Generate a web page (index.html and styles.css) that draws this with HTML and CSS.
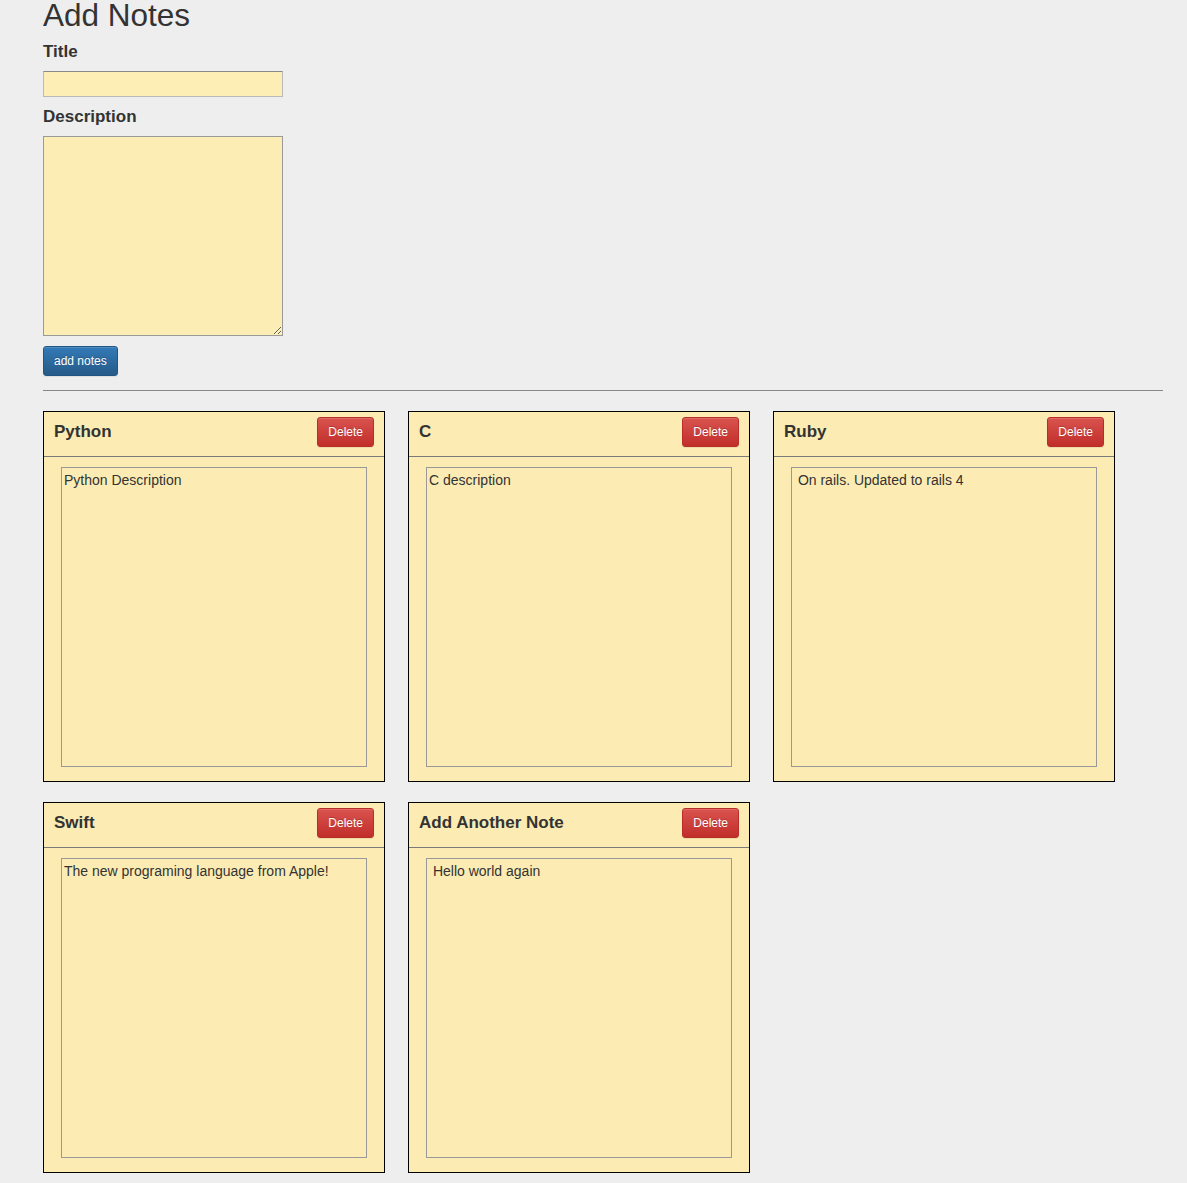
FILE: index.html
```html
<!DOCTYPE html>
<html lang="en">
<head>
<meta charset="utf-8">
<title>Add Notes</title>
<link rel="stylesheet" href="styles.css">
</head>
<body>
<div class="page">
  <h1 class="page-title">Add Notes</h1>
  <form class="note-form">
    <label class="field-label" for="title">Title</label>
    <input class="title-input" id="title" type="text">
    <label class="field-label" for="desc">Description</label>
    <textarea class="desc-input" id="desc"></textarea>
    <button type="button" class="btn btn-primary">add notes</button>
  </form>
  <hr class="divider">
  <div class="notes">
    <div class="note">
      <div class="note-head"><h3 class="note-title">Python</h3><button type="button" class="btn btn-danger">Delete</button></div>
      <textarea class="note-body" readonly>Python Description</textarea>
    </div>
    <div class="note">
      <div class="note-head"><h3 class="note-title">C</h3><button type="button" class="btn btn-danger">Delete</button></div>
      <textarea class="note-body" readonly>C description</textarea>
    </div>
    <div class="note">
      <div class="note-head"><h3 class="note-title">Ruby</h3><button type="button" class="btn btn-danger">Delete</button></div>
      <textarea class="note-body" readonly> On rails. Updated to rails 4</textarea>
    </div>
    <div class="note">
      <div class="note-head"><h3 class="note-title">Swift</h3><button type="button" class="btn btn-danger">Delete</button></div>
      <textarea class="note-body" readonly>The new programing language from Apple!</textarea>
    </div>
    <div class="note">
      <div class="note-head"><h3 class="note-title">Add Another Note</h3><button type="button" class="btn btn-danger">Delete</button></div>
      <textarea class="note-body" readonly> Hello world again</textarea>
    </div>
  </div>
</div>
</body>
</html>
```
FILE: styles.css
```css
* { box-sizing: border-box; }
html, body { margin: 0; padding: 0; }
body {
  background: #eeeeee;
  color: #333333;
  font-family: "Liberation Sans", Arial, sans-serif;
  font-size: 14px;
}
.page {
  padding: 0 0 0 43px;
  width: 1163px;
}
.page-title {
  margin: 0 0 12px 0;
  font-size: 31.5px;
  font-weight: normal;
  line-height: 30px;
}
.note-form {
  display: flex;
  flex-direction: column;
  align-items: flex-start;
}
.field-label {
  display: block;
  font-size: 17px;
  font-weight: bold;
  line-height: 20px;
  margin-bottom: 9px;
}
.title-input {
  width: 240px;
  height: 26px;
  margin: 0 0 10px 0;
  background: #fdeeb5;
  border: 1px solid #b9b9b9;
  border-top-color: #8a8a8a;
  padding: 2px 4px;
  font: 14px "Liberation Sans", Arial, sans-serif;
}
.desc-input {
  width: 240px;
  height: 200px;
  margin: 0 0 10px 0;
  background: #fcedb4;
  border: 1px solid #9a9a9a;
  padding: 2px;
  font: 14px "Liberation Sans", Arial, sans-serif;
}
.btn {
  display: inline-block;
  font-family: "Liberation Sans", Arial, sans-serif;
  font-size: 12px;
  line-height: 18px;
  padding: 5px 10px;
  border: 1px solid transparent;
  border-radius: 3px;
  color: #ffffff;
  text-shadow: 0 -1px 0 rgba(0, 0, 0, 0.2);
  box-shadow: inset 0 1px 0 rgba(255, 255, 255, 0.15), 0 1px 1px rgba(0, 0, 0, 0.075);
  cursor: pointer;
  white-space: nowrap;
}
.btn-primary {
  background: linear-gradient(to bottom, #337ab7 0%, #265a88 100%);
  border-color: #245580;
}
.btn-danger {
  background: linear-gradient(to bottom, #d9534f 0%, #c12e2a 100%);
  border-color: #b92c28;
}
.divider {
  margin: 14px 0 20px 0;
  border: 0;
  border-top: 1px solid #888888;
  height: 0;
  width: 1120px;
}
.notes {
  display: grid;
  grid-template-columns: repeat(3, 342px);
  column-gap: 23px;
  row-gap: 20px;
}
.note {
  width: 342px;
  height: 371px;
  border: 1px solid #000000;
  background: #fcecb3;
  display: flex;
  flex-direction: column;
}
.note-head {
  height: 45px;
  border-bottom: 1px solid #7a7a7a;
  padding: 5px 10px 0 10px;
  display: flex;
  justify-content: space-between;
  align-items: flex-start;
}
.note-title {
  margin: -5px 0 0 0;
  font-size: 17px;
  font-weight: bold;
  line-height: 40px;
}
.note-body {
  display: block;
  width: 306px;
  height: 300px;
  margin: 10px 17px 0 17px;
  background: #fcecb3;
  border: 1px solid #999999;
  padding: 2px;
  resize: none;
  color: #333333;
  font: 14px/20px "Liberation Sans", Arial, sans-serif;
  outline: none;
}
```
